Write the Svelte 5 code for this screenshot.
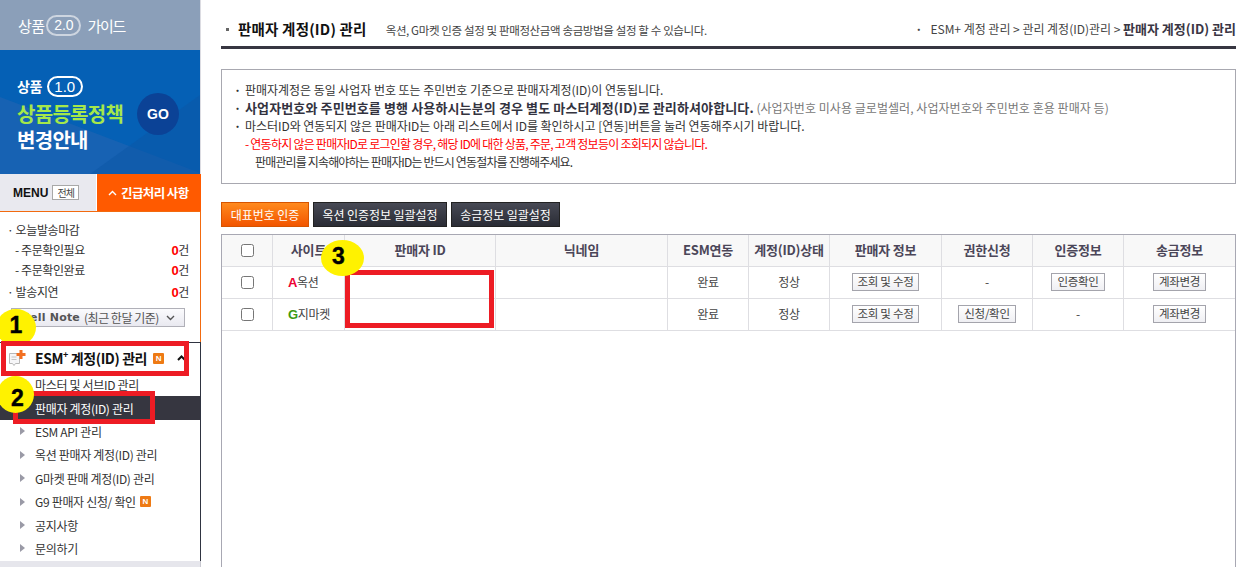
<script>
  const rows = [
    { letter: 'A', cls: 'auction', name: '옥션', perm: null, auth: '인증확인' },
    { letter: 'G', cls: 'gmarket', name: '지마켓', perm: '신청/확인', auth: null }
  ];
  const menu = [
    { label: '마스터 및 서브ID 관리' },
    { label: '판매자 계정(ID) 관리', active: true },
    { label: 'ESM API 관리' },
    { label: '옥션 판매자 계정(ID) 관리' },
    { label: 'G마켓 판매 계정(ID) 관리' },
    { label: 'G9 판매자 신청/ 확인', badge: true },
    { label: '공지사항' },
    { label: '문의하기' }
  ];
  const heads = ['사이트', '판매자 ID', '닉네임', 'ESM연동', '계정(ID)상태', '판매자 정보', '권한신청', '인증정보', '송금정보'];
</script>

<div class="page">
  <aside class="side">
    <div class="guide">
      <span>상품</span><b class="pill">2.0</b><span class="g-end">가이드</span>
    </div>
    <div class="banner">
      <svg class="facets" viewBox="0 0 200 124" preserveAspectRatio="none" aria-hidden="true">
        <polygon points="0,47 200,123 200,124 0,124" fill="#1f64b2" opacity=".7" />
        <polygon points="200,45 200,124 90,124" fill="#0b55a6" opacity=".5" />
      </svg>
      <div class="banner-text">
        <div class="b1"><span>상품</span><b class="pill solid">1.0</b></div>
        <div class="b2">상품등록정책</div>
        <div class="b3">변경안내</div>
      </div>
      <div class="go">GO</div>
    </div>
    <div class="tabs">
      <div class="tab-menu"><b>MENU</b><span class="all">전체</span></div>
      <div class="tab-urgent">
        <svg width="9" height="6" viewBox="0 0 9 6" aria-hidden="true"><path d="M1 5l3.5-3.5L8 5" fill="none" stroke="#fff" stroke-width="1.4" /></svg>
        <span>긴급처리 사항</span>
      </div>
    </div>
    <div class="urgent">
      <div class="u-row"><span>· 오늘발송마감</span></div>
      <div class="u-row sub-row"><span>- 주문확인필요</span><span><i>0</i>건</span></div>
      <div class="u-row sub-row"><span>- 주문확인완료</span><span><i>0</i>건</span></div>
      <div class="u-row last"><span>· 발송지연</span><span><i>0</i>건</span></div>
      <div class="note">
        <b>Sell Note</b><span>(최근 한달 기준)</span>
        <svg width="9" height="6" viewBox="0 0 9 6" aria-hidden="true"><path d="M1 1l3.5 3.5L8 1" fill="none" stroke="#555" stroke-width="1.4" /></svg>
      </div>
    </div>
    <nav class="menu">
      <div class="menu-head">
        <svg class="m-icon" width="20" height="18" viewBox="0 0 20 18" aria-hidden="true">
          <path d="M1.5 4.5h10v10h-4l-1.5 2-1.5-2h-3z" fill="#f6f6f8" stroke="#b8b8b8" />
          <path d="M3.5 8h5M3.5 10.5h5" stroke="#c4c4c4" />
          <path d="M13 1v9M8.5 5.500h9" stroke="#f26f21" stroke-width="3" />
        </svg>
        <b>ESM<sup>+</sup> 계정(ID) 관리</b>
        <span class="n">N</span>
        <svg class="caret" width="9" height="6" viewBox="0 0 9 6" aria-hidden="true"><path d="M1 5l3.5-3.5L8 5" fill="none" stroke="#111" stroke-width="2" /></svg>
      </div>
      <ul>
        {#each menu as m}
          <li class:active={m.active}>
            <span class="tri"></span>{m.label}{#if m.badge}<span class="n small">N</span>{/if}
          </li>
        {/each}
      </ul>
    </nav>
    <div class="side-foot"></div>
  </aside>

  <main class="main">
    <header class="title">
      <span class="sq"></span>
      <h1>판매자 계정(ID) 관리</h1>
      <p class="sub">옥션, G마켓 인증 설정 및 판매정산금액 송금방법을 설정 할 수 있습니다.</p>
      <div class="crumb"><span class="dot">·</span>ESM+ 계정 관리 &gt; 관리 계정(ID)관리 &gt; <b>판매자 계정(ID) 관리</b></div>
    </header>

    <section class="notice">
      <p><span class="bul">·</span>판매자계정은 동일 사업자 번호 또는 주민번호 기준으로 판매자계정(ID)이 연동됩니다.</p>
      <p><span class="bul">·</span><b>사업자번호와 주민번호를 병행 사용하시는분의 경우 별도 마스터계정(ID)로 관리하셔야합니다.</b> <span class="grey">(사업자번호 미사용 글로벌셀러, 사업자번호와 주민번호 혼용 판매자 등)</span></p>
      <p><span class="bul">·</span>마스터ID와 연동되지 않은 판매자ID는 아래 리스트에서 ID를 확인하시고 [연동]버튼을 눌러 연동해주시기 바랍니다.</p>
      <p class="red">- 연동하지 않은 판매자ID로 로그인할 경우, 해당 ID에 대한 상품, 주문, 고객 정보등이 조회되지 않습니다.</p>
      <p class="ind">판매관리를 지속해야하는 판매자ID는 반드시 연동절차를 진행해주세요.</p>
    </section>

    <div class="actions">
      <button class="btn orange">대표번호 인증</button>
      <button class="btn dark">옥션 인증정보 일괄설정</button>
      <button class="btn dark">송금정보 일괄설정</button>
    </div>

    <div class="table-wrap">
      <table>
        <colgroup>
          <col style="width:51px" /><col style="width:72px" /><col style="width:151px" /><col style="width:172px" />
          <col style="width:81px" /><col style="width:81px" /><col style="width:112px" /><col style="width:91px" />
          <col style="width:91px" /><col />
        </colgroup>
        <thead>
          <tr>
            <th><span class="cb"></span></th>
            {#each heads as h}<th>{h}</th>{/each}
          </tr>
        </thead>
        <tbody>
          {#each rows as r}
            <tr>
              <td><span class="cb"></span></td>
              <td class="site"><b class={r.cls}>{r.letter}</b>{r.name}</td>
              <td></td>
              <td></td>
              <td>완료</td>
              <td>정상</td>
              <td><span class="mini">조회 및 수정</span></td>
              <td>{#if r.perm}<span class="mini">{r.perm}</span>{:else}-{/if}</td>
              <td>{#if r.auth}<span class="mini">{r.auth}</span>{:else}-{/if}</td>
              <td><span class="mini">계좌변경</span></td>
            </tr>
          {/each}
        </tbody>
      </table>
    </div>
  </main>

  <div class="pin pin1"><span>1</span></div>
  <div class="mark box1"></div>
  <div class="mark box2"></div>
  <div class="mark box3"></div>
  <div class="pin pin2"><span>2</span></div>
  <div class="pin pin3"><span>3</span></div>
</div>

<style>
  :global(body) {
    margin: 0;
    background: #fff;
    overflow: hidden;
  }
  * {
    box-sizing: border-box;
  }
  .page {
    position: relative;
    display: flex;
    width: 1239px;
    height: 567px;
    overflow: hidden;
    font-family: "Noto Sans CJK KR", "Liberation Sans", sans-serif;
    font-size: 12px;
    color: #333;
    letter-spacing: -0.6px;
  }

  /* sidebar */
  .side {
    flex: none;
    width: 201px;
    display: flex;
    flex-direction: column;
  }
  .guide {
    height: 50px;
    background: #8b9fb9;
    border-right: 1px solid #dcdce2;
    color: #fff;
    display: flex;
    align-items: center;
    gap: 2px;
    padding-left: 18px;
    font-size: 15px;
    letter-spacing: -0.6px;
  }
  .g-end {
    margin-left: 4px;
    letter-spacing: -1.3px;
  }
  .pill {
    display: inline-flex;
    align-items: center;
    justify-content: center;
    width: 35px;
    height: 21px;
    border: 2px solid #cdd5e0;
    border-radius: 11px;
    font-weight: 400;
    font-size: 14px;
    letter-spacing: 0;
    font-family: "Liberation Sans", sans-serif;
  }
  .banner {
    position: relative;
    height: 124px;
    background: #0560b5;
    border-right: 1px solid #dcdce2;
    color: #fff;
    display: flex;
    padding: 24px 0 0 17px;
    overflow: hidden;
  }
  .facets {
    position: absolute;
    inset: 0;
    width: 100%;
    height: 100%;
  }
  .banner-text {
    position: relative;
    display: flex;
    flex-direction: column;
  }
  .b1 {
    display: flex;
    align-items: center;
    gap: 5px;
    height: 24px;
    font-size: 14px;
    font-weight: 700;
    letter-spacing: -0.5px;
  }
  .pill.solid {
    border-color: #fff;
    width: 36px;
    font-size: 15px;
  }
  .b2 {
    margin-top: 3px;
    font-size: 20px;
    line-height: 25px;
    font-weight: 700;
    color: #a5e84a;
    letter-spacing: -0.7px;
  }
  .b3 {
    font-size: 20px;
    line-height: 27px;
    font-weight: 700;
    letter-spacing: -0.7px;
  }
  .go {
    position: absolute;
    left: 137px;
    top: 43px;
    width: 42px;
    height: 42px;
    border-radius: 50%;
    background: #0b4296;
    display: flex;
    align-items: center;
    justify-content: center;
    font: 700 14px "Liberation Sans", sans-serif;
    letter-spacing: 0;
  }
  .tabs {
    display: flex;
    height: 38px;
    border-bottom: 1px solid #f26a0f;
  }
  .tab-menu {
    width: 97px;
    background: #e9e9ef;
    border-right: 1px solid #fff;
    display: flex;
    align-items: center;
    gap: 4px;
    padding-left: 13px;
    color: #111;
  }
  .tab-menu b {
    font: 700 12px "Liberation Sans", sans-serif;
    letter-spacing: 0;
  }
  .all {
    border: 1px solid #a8a8a8;
    background: #fff;
    width: 27px;
    height: 15px;
    line-height: 13px;
    text-align: center;
    font-size: 10px;
    letter-spacing: -0.8px;
    color: #444;
  }
  .tab-urgent {
    flex: 1;
    background: #ff5a00;
    color: #fff;
    display: flex;
    align-items: center;
    gap: 4px;
    padding-left: 11px;
    font-weight: 700;
    font-size: 12.5px;
  }
  .urgent {
    height: 130px;
    border-right: 1px solid #f26a0f;
    padding: 8px 11px 0 7px;
    color: #333;
    letter-spacing: -0.4px;
  }
  .u-row {
    display: flex;
    justify-content: space-between;
    height: 20px;
    line-height: 20px;
  }
  .sub-row {
    padding-left: 8px;
  }
  .u-row.last {
    margin-top: 2px;
    height: 21px;
  }
  .u-row i {
    font-style: normal;
    font-weight: 700;
    color: #f00;
    font-family: "Liberation Sans", sans-serif;
    font-size: 13px;
  }
  .note {
    margin: 5px 0 0 4px;
    width: 174px;
    height: 19px;
    border: 1px solid #b0b0b8;
    background: linear-gradient(#fbfbfd, #e9e9f0);
    display: flex;
    align-items: center;
    padding-left: 10px;
    color: #555;
    font-size: 12px;
    letter-spacing: -0.5px;
  }
  .note b {
    font-family: "DejaVu Sans", sans-serif;
    font-size: 11px;
    letter-spacing: 0.2px;
    margin-right: 4px;
  }
  .note svg {
    margin-left: 7px;
  }
  .menu {
    height: 219px;
    border-right: 1px solid #2f3441;
    border-top: 1px solid #2f3441;
  }
  .menu-head {
    height: 30px;
    display: flex;
    align-items: center;
    padding: 0 0 0 8px;
    color: #111;
    font-size: 14px;
  }
  .m-icon {
    margin-right: 7px;
  }
  .menu-head b {
    letter-spacing: -0.4px;
  }
  .menu-head sup {
    font-size: 9px;
    line-height: 0;
  }
  .n {
    display: inline-flex;
    align-items: center;
    justify-content: center;
    width: 11px;
    height: 11px;
    margin-left: 6px;
    background: #ee7a14;
    color: #fff;
    font: 700 8px "Liberation Sans", sans-serif;
    letter-spacing: 0;
    border-radius: 1px;
  }
  .n.small {
    margin-left: 4px;
  }
  .caret {
    margin-left: 13px;
  }
  ul {
    list-style: none;
    margin: 0;
    padding: 0;
  }
  li {
    height: 23.4px;
    display: flex;
    align-items: center;
    padding-left: 20px;
    color: #333;
    white-space: nowrap;
    letter-spacing: -0.32px;
  }
  .tri {
    width: 0;
    height: 0;
    margin-right: 10px;
    border-left: 5px solid #9a9aa6;
    border-top: 4px solid transparent;
    border-bottom: 4px solid transparent;
  }
  li.active {
    background: #363640;
    color: #fff;
  }
  li.active .tri {
    visibility: hidden;
  }
  .side-foot {
    flex: 1;
    background: #e6e6ec;
    border-right: 1px solid #c8c8d0;
  }

  /* main */
  .main {
    flex: none;
    width: 1015px;
    margin-left: 20px;
    display: flex;
    flex-direction: column;
  }
  .title {
    height: 49px;
    padding: 15px 0 0 5px;
    border-bottom: 3px solid #373641;
    display: flex;
    align-items: flex-start;
    white-space: nowrap;
  }
  .sq {
    width: 3px;
    height: 3px;
    margin: 13px 9px 0 0;
    background: #666;
  }
  h1 {
    margin: 0;
    font-size: 14.5px;
    line-height: 28px;
    color: #111;
    font-weight: 700;
    letter-spacing: 0.2px;
  }
  .sub {
    margin: 1px 0 0 19px;
    font-size: 11.5px;
    line-height: 28px;
    color: #444;
    letter-spacing: -0.37px;
  }
  .crumb {
    margin-left: auto;
    line-height: 28px;
    color: #444;
    font-size: 12px;
    letter-spacing: -0.02px;
  }
  .dot {
    margin-right: 8px;
    font-weight: 700;
  }
  .crumb b {
    color: #3a3644;
    font-size: 13px;
    letter-spacing: 0;
  }
  .notice {
    margin-top: 20px;
    height: 115px;
    border: 1px solid #a8a8b0;
    padding: 11px 0 0 12px;
    line-height: 18px;
    font-size: 12px;
    color: #333;
    letter-spacing: -0.04px;
  }
  .notice p {
    margin: 0;
    white-space: nowrap;
  }
  .bul {
    display: inline-block;
    width: 11px;
    font-weight: 700;
  }
  .notice b {
    color: #33333f;
    font-size: 13px;
    letter-spacing: 0.12px;
  }
  .grey {
    color: #777;
    letter-spacing: 0.05px;
  }
  .notice .red {
    color: #f00;
    padding-left: 11px;
    letter-spacing: -0.76px;
  }
  .notice .ind {
    padding-left: 21px;
    letter-spacing: -0.85px;
  }
  .actions {
    display: flex;
    gap: 4px;
    margin-top: 18px;
  }
  .btn {
    height: 25px;
    padding: 0;
    font: inherit;
    color: #fff;
    letter-spacing: -0.05px;
    border-radius: 0;
  }
  .btn.orange {
    width: 88px;
    border: 1px solid #d65400;
    background: linear-gradient(#ff8a1e, #f25500);
  }
  .btn.dark {
    border: 1px solid #222;
    background: linear-gradient(#474954, #2a2c35);
  }
  .btn.dark:nth-child(2) { width: 134px; }
  .btn.dark:nth-child(3) { width: 109px; }
  .table-wrap {
    margin-top: 7px;
    flex: 1;
    border: 1px solid #a8a8b3;
    border-bottom: 0;
  }
  table {
    width: 100%;
    table-layout: fixed;
    border-collapse: separate;
    border-spacing: 0;
  }
  th, td {
    height: 32px;
    padding: 0 0 2px;
    text-align: center;
    border-bottom: 1px solid #dedee2;
    border-right: 1px solid #dedee2;
    vertical-align: middle;
    white-space: nowrap;
  }
  th:last-child, td:last-child {
    border-right: 0;
  }
  th {
    background: #f8f8f8;
    color: #4b4658;
    font-weight: 700;
    font-size: 13px;
    letter-spacing: -0.2px;
  }
  td {
    color: #444;
    letter-spacing: -0.3px;
  }
  td.site {
    text-align: left;
    padding-left: 15px;
  }
  .auction { color: #ee0033; font: 700 13px "Liberation Sans", sans-serif; }
  .gmarket { color: #3c9a10; font: 700 13px "Liberation Sans", sans-serif; }
  .cb {
    display: block;
    width: 13px;
    height: 13px;
    margin: 2px auto 0;
    border: 1px solid #767676;
    border-radius: 2.5px;
    background: #fff;
  }
  .mini {
    display: inline-block;
    height: 18px;
    line-height: 15px;
    padding: 0 5px;
    border: 1px solid #a4a4ac;
    background: linear-gradient(#fff, #efeff3);
    color: #444;
    font-size: 11.5px;
    letter-spacing: -0.3px;
    vertical-align: middle;
  }

  /* annotations laid over the screenshot */
  .mark {
    position: absolute;
    border: 5px solid #ed1c24;
    pointer-events: none;
  }
  .box1 { left: 1px; top: 341px; width: 188px; height: 35px; }
  .box2 { left: 13px; top: 391px; width: 142px; height: 33px; }
  .box3 { left: 345px; top: 270px; width: 149px; height: 58px; }
  .pin {
    position: absolute;
    display: flex;
    align-items: center;
    justify-content: center;
    border-radius: 50%;
    background: #fff200;
    color: #000;
    font: 700 23px "Liberation Sans", sans-serif;
    letter-spacing: 0;
    -webkit-text-stroke: 0.4px #000;
  }
  .pin span {
    position: relative;
  }
  .pin1 { left: -4px; top: 309px; width: 40px; height: 37px; }
  .pin1 span { top: -2px; }
  .pin2 { left: -3px; top: 376px; width: 37px; height: 37px; }
  .pin2 span { top: 4px; left: 2px; }
  .pin3 { left: 321px; top: 240px; width: 43px; height: 36px; }
  .pin3 span { top: -2px; left: -4px; }
</style>
